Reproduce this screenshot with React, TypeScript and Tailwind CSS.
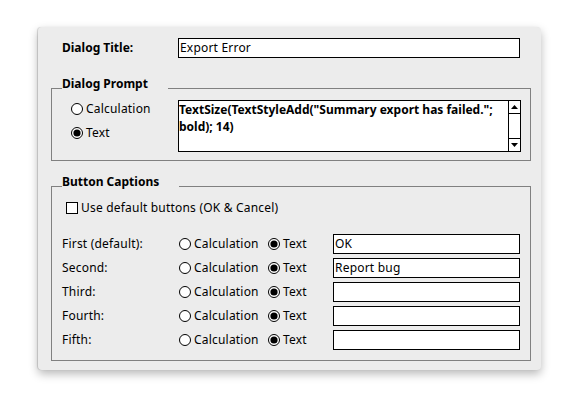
import React from "react";

const FONT = { fontFamily: '"Noto Sans", "DejaVu Sans", sans-serif' };

function Radio({ on }: { on?: boolean }) {
  return (
    <svg width="12" height="12" viewBox="0 0 12 12" className="shrink-0">
      <circle cx="6" cy="6" r="5.5" fill="#fff" stroke="#000" strokeWidth="1" />
      {on && <circle cx="6" cy="6" r="3.6" fill="#000" />}
    </svg>
  );
}

function Group({ title, className, children }: { title: string; className?: string; children: React.ReactNode }) {
  return (
    <div className={"relative border border-[#808080] " + (className ?? "")}>
      <span className="absolute left-[10px] top-[-12px] bg-[#ececec] pr-[20px] font-bold tracking-normal leading-[14px]">{title}</span>
      {children}
    </div>
  );
}

const rows = [
  { label: "First (default):", value: "OK" },
  { label: "Second:", value: "Report bug" },
  { label: "Third:", value: "" },
  { label: "Fourth:", value: "" },
  { label: "Fifth:", value: "" },
];

export default function App() {
  return (
    <div className="w-[581px] h-[397px] bg-white text-[12px] tracking-[0.2px] text-black" style={FONT}>
      <div className="absolute left-[38px] top-[27px] w-[503px] h-[343px] bg-[#ececec] rounded-[4px] shadow-[0_4px_10px_rgba(0,0,0,0.28),-1px_0_1px_rgba(0,0,0,0.15)] flex flex-col pl-[13px] pr-[10px]">
        {/* title row */}
        <div className="flex items-center mt-[11px] h-[20px]">
          <span className="ml-[11px] w-[116px] font-bold tracking-normal">Dialog Title:</span>
          <div className="w-[342px] h-[20px] bg-white border border-black flex items-center pl-[1px]">Export Error</div>
        </div>

        <Group title="Dialog Prompt" className="mt-[30px] h-[73px]">
          <div className="flex pt-[11px]">
            <div className="flex flex-col gap-[12px] pl-[19px] w-[126px] pt-[3px]">
              <div className="flex items-center gap-[3px] h-[12px]"><Radio />Calculation</div>
              <div className="flex items-center gap-[3px] h-[12px]"><Radio on />Text</div>
            </div>
            <div className="w-[343px] h-[52px] bg-white border border-black flex">
              <div className="flex-1 font-bold tracking-normal leading-[17px] pt-[0px] whitespace-nowrap">
                TextSize(TextStyleAdd("Summary export has failed.";
                <br />
                bold); 14)
              </div>
              <div className="w-[12px] border-l border-black flex flex-col justify-between">
                <div className="h-[13px] border-b border-black flex items-center justify-center">
                  <svg width="7" height="4" viewBox="0 0 7 4"><path d="M0 4L3.5 0L7 4Z" fill="#000" /></svg>
                </div>
                <div className="h-[13px] border-t border-black flex items-center justify-center">
                  <svg width="7" height="4" viewBox="0 0 7 4"><path d="M0 0L3.5 4L7 0Z" fill="#000" /></svg>
                </div>
              </div>
            </div>
          </div>
        </Group>

        <Group title="Button Captions" className="mt-[25px] h-[175px]">
          <div className="flex items-center gap-[3px] ml-[14px] mt-[15px] h-[12px]">
            <div className="w-[12px] h-[12px] bg-white border border-black" />
            Use default buttons (OK &amp; Cancel)
          </div>
          <div className="flex flex-col gap-[4px] mt-[20px]">
            {rows.map((r) => (
              <div key={r.label} className="flex items-center h-[20px]">
                <span className="ml-[10px] w-[117px]">{r.label}</span>
                <div className="flex items-center gap-[3px] w-[89px]"><Radio />Calculation</div>
                <div className="flex items-center gap-[3px] w-[65px]"><Radio on />Text</div>
                <div className="w-[187px] h-[20px] bg-white border border-black flex items-center pl-[1px]">{r.value}</div>
              </div>
            ))}
          </div>
        </Group>
      </div>
    </div>
  );
}
